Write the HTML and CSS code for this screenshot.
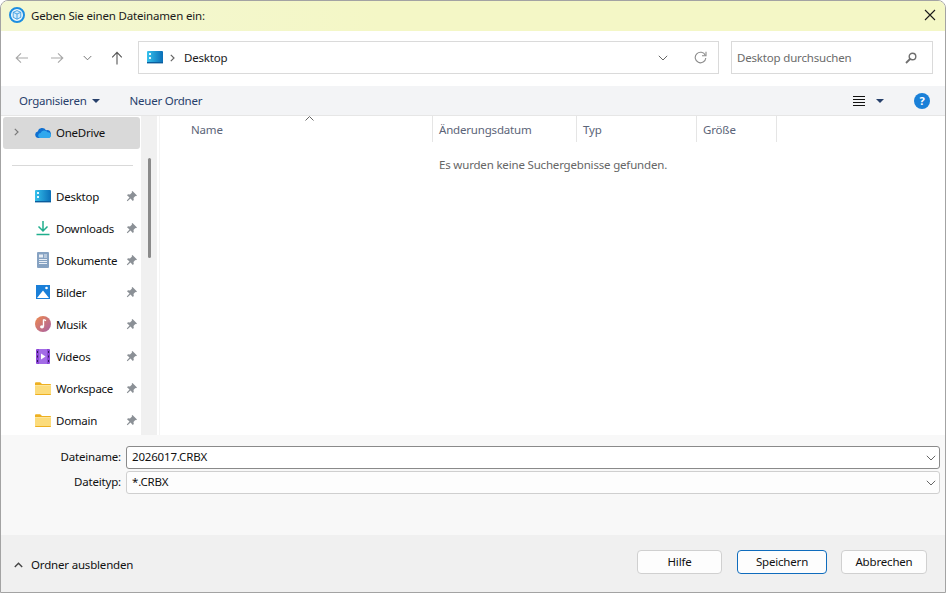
FILE: index.html
```html
<!DOCTYPE html>
<html lang="de">
<head>
<meta charset="utf-8">
<title>Geben Sie einen Dateinamen ein:</title>
<link rel="stylesheet" href="styles.css">
</head>
<body>
<svg class="defs" width="0" height="0" aria-hidden="true">
  <defs>
    <linearGradient id="deskGrad" x1="0" y1="0" x2="1" y2="0"><stop offset="0" stop-color="#35c1ec"/><stop offset="1" stop-color="#0a6fb8"/></linearGradient>
    <linearGradient id="musicGrad" x1="0" y1="0" x2="1" y2="1"><stop offset="0" stop-color="#ef8a4c"/><stop offset="1" stop-color="#a75fa6"/></linearGradient>
    <symbol id="desk" viewBox="0 0 16 13"><rect x="0" y="0" width="16" height="12" rx="1" fill="url(#deskGrad)"/><rect x="2" y="2" width="2" height="2" fill="#e4f7fd"/><rect x="2" y="6" width="2" height="2" fill="#e4f7fd"/><rect x="0" y="11" width="16" height="1.4" fill="#0b5c9c"/></symbol>
    <symbol id="pin" viewBox="0 0 12 12"><path d="M6.500 1L11 5.500 10 6.300 9.300 6 7.500 8 7.800 10 6.800 11 4.500 8.500 1.500 11.200 .8 10.500 3.500 7.500 1 5.200 2 4.200 4 4.500 6 2.500 5.700 1.800z" fill="#8b9096"/></symbol>
    <symbol id="folder" viewBox="0 0 16 13"><path d="M0 1.500C0 .7.500.3 1.200.3h4l1.800 1.700h8c.6 0 1 .4 1 1V3H0z" fill="#eeb021"/><path d="M0 3.200h16v8.600c0 .7-.4 1.200-1.100 1.200H1.100C.4 13 0 12.500 0 11.800z" fill="#fcdc7c"/><path d="M0 12h16v.2c0 .5-.4.800-1 .800H1c-.6 0-1-.3-1-.8z" fill="#eeb021"/></symbol>
    <symbol id="chev" viewBox="0 0 10 6"><path d="M.8.800L5 5l4.200-4.200" fill="none" stroke="#666" stroke-width="1"/></symbol>
  </defs>
</svg>
<div class="window">
  <header class="titlebar">
    <svg class="app-icon" width="16" height="16" viewBox="0 0 16 16"><circle cx="8" cy="8" r="7" fill="#eef7fd" stroke="#1d8ee0" stroke-width="2"/><path d="M4.200 5.300L8 3.600l3.800 1.700v5L8 12.200l-3.800-1.900z" fill="#d4ebfa" stroke="#3a9ce2" stroke-width=".9"/><path d="M4.200 5.300L8 7l3.800-1.700M8 7v5.200" fill="none" stroke="#3a9ce2" stroke-width=".9"/></svg>
    <span class="title">Geben Sie einen Dateinamen ein:</span>
    <svg class="close" width="12" height="12" viewBox="0 0 12 12"><path d="M1 1l10 10M11 1L1 11" stroke="#1a1a1a" stroke-width="1.100"/></svg>
  </header>

  <nav class="navbar">
    <div class="nav-buttons">
      <svg class="nav-back" width="14" height="12" viewBox="0 0 14 12"><path d="M13 6H1.500M6 1.300L1.200 6 6 10.700" fill="none" stroke="#a8a8a8" stroke-width="1.100"/></svg>
      <svg class="nav-fwd" width="14" height="12" viewBox="0 0 14 12"><path d="M1 6h11.500M8 1.300L12.800 6 8 10.700" fill="none" stroke="#a8a8a8" stroke-width="1.100"/></svg>
      <svg class="nav-down" width="9" height="6"><use href="#chev"/></svg>
      <svg class="nav-up" width="12" height="14" viewBox="0 0 12 14"><path d="M6 13.500V1.500M1.200 6.300L6 1.300l4.800 5" fill="none" stroke="#555" stroke-width="1.100"/></svg>
    </div>
    <div class="address">
      <svg class="address-icon" width="16" height="13"><use href="#desk"/></svg>
      <svg class="crumb-sep" width="5" height="8" viewBox="0 0 5 8"><path d="M.8.800L4 4 .8 7.200" fill="none" stroke="#666" stroke-width="1.200"/></svg>
      <span class="crumb">Desktop</span>
      <svg class="address-chev" width="10" height="6"><use href="#chev"/></svg>
      <svg class="refresh" width="13" height="13" viewBox="0 0 13 13"><path d="M11.300 4.200A5.300 5.300 0 1 0 11.800 7" fill="none" stroke="#8c8c8c" stroke-width="1.100"/><path d="M12 .8v4H8" fill="none" stroke="#8c8c8c" stroke-width="1.100"/></svg>
    </div>
    <div class="search">
      <span class="search-text">Desktop durchsuchen</span>
      <svg width="12" height="12" viewBox="0 0 12 12"><circle cx="7.500" cy="4.500" r="3.300" fill="none" stroke="#6f6f6f" stroke-width="1.400"/><path d="M5 7L1 11" stroke="#6f6f6f" stroke-width="1.800"/></svg>
    </div>
  </nav>

  <div class="toolbar">
    <span class="tool">Organisieren</span>
    <span class="caret organise-caret"></span>
    <span class="tool new-folder">Neuer Ordner</span>
    <span class="toolbar-spacer"></span>
    <span class="view-icon"><i></i><i></i><i></i><i></i></span>
    <span class="caret view-caret"></span>
    <span class="help">?</span>
  </div>

  <main class="main">
    <aside class="sidebar">
      <div class="onedrive">
        <svg class="expand" width="5" height="8" viewBox="0 0 5 8"><path d="M.8.800L4 4 .8 7.200" fill="none" stroke="#7a7a7a" stroke-width="1.200"/></svg>
        <svg class="row-icon" width="16" height="11" viewBox="0 0 16 11"><path d="M3.500 11A3.300 3.300 0 0 1 2.700 4.500 4.500 4.500 0 0 1 11 3.300 3.600 3.600 0 0 1 13 11z" fill="#0f6fd0"/><path d="M5 11a2.500 2.500 0 0 1 .6-4.900 4 4 0 0 1 7-.8A2.900 2.900 0 0 1 16 8.200 2.800 2.800 0 0 1 13.200 11z" fill="#30a8ee"/></svg>
        <span class="row-label">OneDrive</span>
      </div>
      <div class="divider"></div>
      <ul class="quick">
        <li class="quick-item">
          <svg class="row-icon" width="16" height="13"><use href="#desk"/></svg>
          <span class="row-label">Desktop</span><svg class="pin" width="12" height="12"><use href="#pin"/></svg>
        </li>
        <li class="quick-item">
          <svg class="row-icon" width="16" height="16" viewBox="0 0 16 16"><path d="M8 1v10M3.500 6.500L8 11l4.500-4.500" fill="none" stroke="#20ae8d" stroke-width="1.500"/><path d="M1.500 14.500h13" stroke="#20ae8d" stroke-width="1.700"/></svg>
          <span class="row-label">Downloads</span><svg class="pin" width="12" height="12"><use href="#pin"/></svg>
        </li>
        <li class="quick-item">
          <svg class="row-icon" width="16" height="16" viewBox="0 0 16 16"><rect x="2" y="0" width="12" height="16" rx="1" fill="#86a2c2"/><rect x="4" y="2.500" width="4" height="3" fill="#e8eef5"/><path d="M9 3h3M9 5h3M4 7.500h8M4 9.500h8M4 11.500h8" stroke="#e8eef5" stroke-width="1"/></svg>
          <span class="row-label">Dokumente</span><svg class="pin" width="12" height="12"><use href="#pin"/></svg>
        </li>
        <li class="quick-item">
          <svg class="row-icon" width="16" height="14" viewBox="0 0 16 14"><rect x="1" width="14" height="14" fill="#1a7fd8"/><circle cx="11.500" cy="3" r="1.300" fill="#fff"/><path d="M2 13l6-7.500 6 7.500z" fill="#fff"/></svg>
          <span class="row-label">Bilder</span><svg class="pin" width="12" height="12"><use href="#pin"/></svg>
        </li>
        <li class="quick-item">
          <svg class="row-icon" width="16" height="16" viewBox="0 0 16 16"><circle cx="8" cy="8" r="8" fill="url(#musicGrad)"/><path d="M8.500 3.500v7" stroke="#fff" stroke-width="1.400"/><path d="M8.500 3.500l2.500 1.200" stroke="#fff" stroke-width="1.300"/><ellipse cx="7" cy="10.800" rx="2" ry="1.600" fill="#fff"/></svg>
          <span class="row-label">Musik</span><svg class="pin" width="12" height="12"><use href="#pin"/></svg>
        </li>
        <li class="quick-item">
          <svg class="row-icon" width="16" height="15" viewBox="0 0 16 15"><rect x="1" width="14" height="15" rx="1" fill="#8b45d6"/><rect x="4" y="0" width="8" height="15" fill="#a36ce6"/><path d="M6 4.500l4.500 3-4.500 3z" fill="#fff"/><path d="M2 2h1v2H2zM2 6.500h1v2H2zM2 11h1v2H2zM13 2h1v2h-1zM13 6.500h1v2h-1zM13 11h1v2h-1z" fill="#2d1a55"/></svg>
          <span class="row-label">Videos</span><svg class="pin" width="12" height="12"><use href="#pin"/></svg>
        </li>
        <li class="quick-item">
          <svg class="row-icon" width="16" height="13"><use href="#folder"/></svg>
          <span class="row-label">Workspace</span><svg class="pin" width="12" height="12"><use href="#pin"/></svg>
        </li>
        <li class="quick-item">
          <svg class="row-icon" width="16" height="13"><use href="#folder"/></svg>
          <span class="row-label">Domain</span><svg class="pin" width="12" height="12"><use href="#pin"/></svg>
        </li>
      </ul>
    </aside>
    <div class="scrollbar"><div class="thumb"></div></div>
    <section class="list">
      <div class="list-head">
        <div class="col col-name">Name<svg class="sort" width="9" height="5" viewBox="0 0 9 5"><path d="M.5 4.500l4-4 4 4" fill="none" stroke="#666"/></svg></div>
        <div class="col col-date">Änderungsdatum</div>
        <div class="col col-type">Typ</div>
        <div class="col col-size">Größe</div>
      </div>
      <p class="empty">Es wurden keine Suchergebnisse gefunden.</p>
    </section>
  </main>

  <section class="form">
    <div class="form-row">
      <label class="form-label">Dateiname:</label>
      <div class="field field-active"><span>2026017.CRBX</span><svg width="10" height="6"><use href="#chev"/></svg></div>
    </div>
    <div class="form-row">
      <label class="form-label">Dateityp:</label>
      <div class="field"><span>*.CRBX</span><svg width="10" height="6"><use href="#chev"/></svg></div>
    </div>
  </section>

  <footer class="footer">
    <svg class="hide-chev" width="9" height="6" viewBox="0 0 9 6"><path d="M.8 5L4.500 1.300 8.200 5" fill="none" stroke="#444" stroke-width="1.400"/></svg>
    <span class="hide-label">Ordner ausblenden</span>
    <span class="toolbar-spacer"></span>
    <button class="btn btn-help">Hilfe</button>
    <button class="btn btn-primary">Speichern</button>
    <button class="btn btn-cancel">Abbrechen</button>
  </footer>
</div>
</body>
</html>
```
FILE: styles.css
```css
* { box-sizing: border-box; }
html, body { margin: 0; padding: 0; }
body { width: 946px; height: 593px; overflow: hidden; background: #fff; font-family: "Noto Sans", "Open Sans", sans-serif; font-size: 11.5px; letter-spacing: -.18px; color: #111; }
.defs { display: block; height: 0; }
svg { display: block; flex: none; }

.window { width: 946px; height: 593px; display: flex; flex-direction: column; border: 1px solid #a3a3a3; border-radius: 8px 8px 0 0; overflow: hidden; background: #fff; }

.titlebar { height: 30px; flex: none; display: flex; align-items: center; padding: 0 9px 2px 8px; background: linear-gradient(90deg, #f3f7d2, #f4f7c6 40%, #f4f7c6); }
.title { margin-left: 6px; flex: 1; color: #1a1a1a; }

.navbar { height: 55px; flex: none; display: flex; align-items: center; background: #fff; padding-bottom: 2px; }
.nav-buttons { width: 137px; display: flex; align-items: center; flex: none; }
.nav-back { margin-left: 14px; }
.nav-fwd { margin-left: 21px; }
.nav-down { margin-left: 19px; }
.nav-up { margin-left: 19px; }

.address { width: 581px; height: 33px; flex: none; display: flex; align-items: center; border: 1px solid #dadada; padding: 0 0 0 8px; }
.crumb-sep { margin-left: 7px; }
.crumb { margin-left: 9px; flex: 1; color: #1a1a1a; }
.address-chev { margin-right: 26px; }
.refresh { margin-right: 11px; }

.search { width: 202px; height: 33px; flex: none; margin-left: 12px; display: flex; align-items: center; justify-content: space-between; border: 1px solid #dadada; padding: 0 15px 0 5px; }
.search-text { color: #6b6b6b; }

.toolbar { height: 30px; flex: none; display: flex; align-items: center; background: #f3f4f6; border-bottom: 1px solid #e6e6e6; padding: 0 15px 0 18px; }
.tool { color: #27406b; letter-spacing: -.23px; }
.caret { width: 0; height: 0; border-style: solid; border-width: 4px 4px 0; border-color: #27406b transparent transparent; }
.organise-caret { margin-left: 5px; }
.new-folder { margin-left: 30px; }
.toolbar-spacer { flex: 1; }
.view-icon { width: 12px; display: flex; flex-direction: column; gap: 2px; }
.view-icon i { display: block; height: 1px; background: #111; }
.view-caret { margin-left: 11px; }
.help { width: 16px; height: 16px; margin-left: 30px; border-radius: 50%; background: #1a80d8; color: #fff; font-weight: 700; font-size: 11px; line-height: 16px; text-align: center; }

.main { height: 319px; flex: none; display: flex; background: #fff; overflow: hidden; }
.sidebar { width: 140px; flex: none; padding: 1px 0 0 2px; overflow: hidden; }
.onedrive { width: 137px; height: 32px; display: flex; align-items: center; background: #d9d9d9; border-radius: 3px; padding: 0 0 2px 11px; }
.onedrive .row-icon { margin-left: 16px; }
.expand { flex: none; }
.divider { width: 121px; height: 1px; margin: 16px 0 0 9px; background: #d9d9d9; }
.quick { list-style: none; margin: 15px 0 0; padding: 0; }
.quick-item { height: 32px; display: flex; align-items: center; padding: 0 0 2px 32px; }
.row-icon { width: 16px; }
.row-label { margin-left: 5px; flex: 1; letter-spacing: -.25px; color: #111; white-space: nowrap; }
.pin { margin-right: 3px; }

.scrollbar { width: 16px; flex: none; background: #f0f0f0; padding: 42px 0 0 7px; }
.thumb { width: 3px; height: 100px; background: #8a8a8a; border-radius: 2px; }

.list { flex: 1; margin-left: 2px; border-left: 1px solid #f4f4f4; }
.list-head { height: 26px; display: flex; }
.col { height: 26px; border-right: 1px solid #e5e5e5; color: #5b6478; display: flex; align-items: center; padding: 1px 0 0 6px; }
.col-name { width: 273px; padding-left: 31px; position: relative; }
.sort { position: absolute; left: 145px; top: 0; }
.col-date { width: 144px; }
.col-type { width: 120px; }
.col-size { width: 80px; }
.empty { margin: 14px 0 0 279px; color: #666; line-height: 17px; }

.form { height: 100px; flex: none; background: #f8f8f8; padding-top: 11px; display: flex; flex-direction: column; gap: 2px; }
.form-row { display: flex; align-items: center; }
.form-label { width: 120px; padding-bottom: 2px; text-align: right; color: #111; }
.field { width: 814px; height: 23px; margin-left: 5px; background: #fdfdfd; border: 1px solid #cfcfcf; border-radius: 3px; display: flex; align-items: center; justify-content: space-between; padding: 0 3px 2px 5px; color: #111; }
.field svg { margin-top: 2px; }
.field-active { background: #fff; border-color: #8a8a8a; }

.footer { flex: 1; display: flex; align-items: center; background: #f0f0f0; padding: 0 18px 4px 13px; }
.hide-chev { margin-top: 6px; }
.hide-label { margin: 6px 0 0 8px; color: #111; }
.btn { height: 24px; font: inherit; letter-spacing: inherit; color: #111; background: #fdfdfd; border: 1px solid #d0d0d0; border-radius: 4px; padding: 0; }
.btn-help { width: 85px; }
.btn-primary { width: 90px; margin-left: 15px; border-color: #0f6cbd; }
.btn-cancel { width: 86px; margin-left: 14px; }
```
